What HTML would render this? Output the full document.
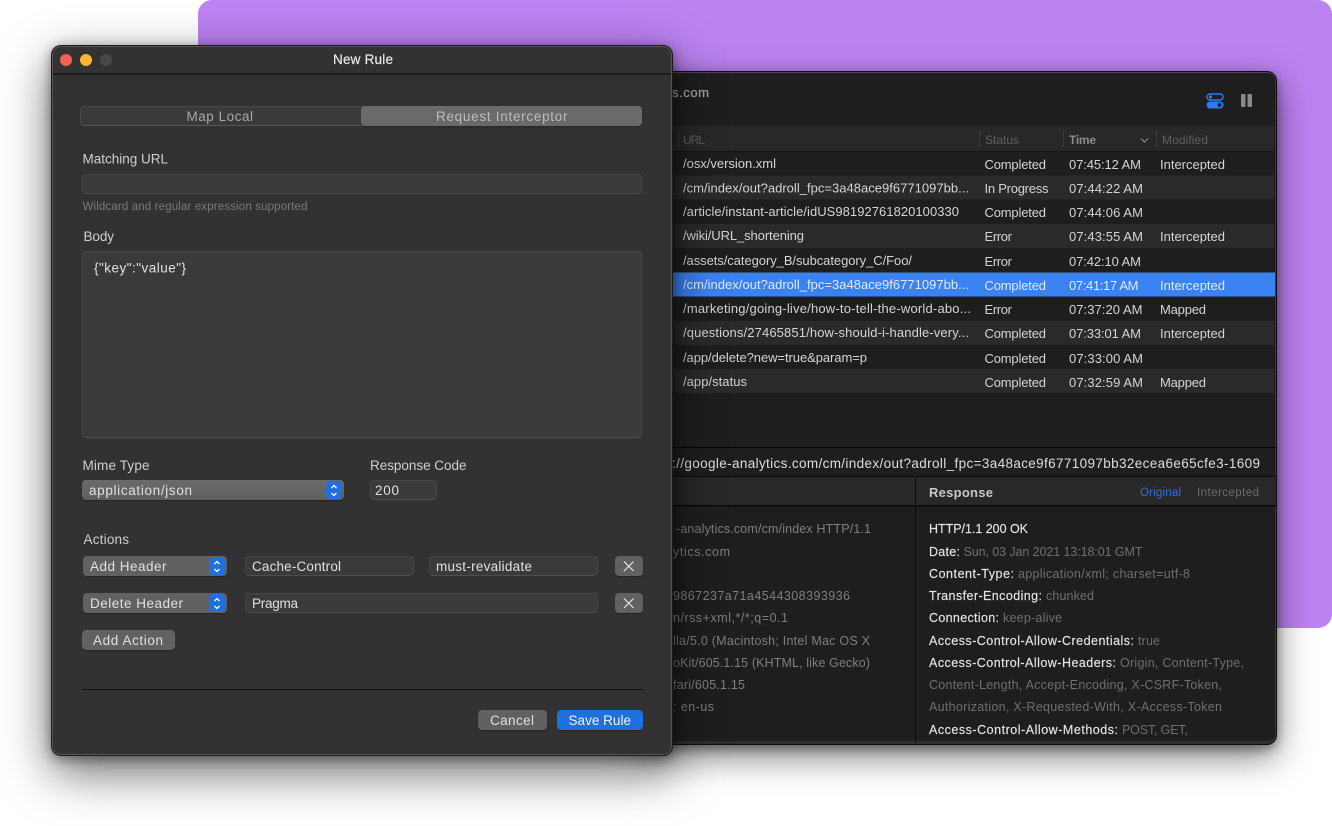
<!DOCTYPE html>
<html><head><meta charset="utf-8"><title>New Rule</title>
<style>
html,body{margin:0;padding:0;width:1332px;height:826px;overflow:hidden;background:#fff}
.a{position:absolute;box-sizing:border-box}
svg{position:absolute;left:0;top:0}
text{font-family:"Liberation Sans",sans-serif;font-size:13px;white-space:pre}
.r{fill:#d4d4d4}.s{fill:#d4d4d4}.h{fill:#5f5f5f;font-size:12px}
.k{fill:#e4e4e4;stroke:#e4e4e4;stroke-width:.15px;font-size:12.5px}.v{fill:#6f6f6f;font-size:12.5px}.q{fill:#7f7f7f;font-size:12.5px}
.d text{font-size:13.5px}
.l{fill:#cfcfcf}.w{fill:#e0e0e0}
.seg{border-radius:4px}
.inp{background:#3a3a3a;border:1px solid #464646;border-bottom-color:#4e4e4e;border-radius:4px}
.btn{background:#616161;border-radius:4px;box-shadow:0 1px 1px rgba(0,0,0,.3)}
.step{background:#1f6fdd;border-radius:4px;width:16px;height:18px;top:1px}
</style></head>
<body>
<div class="a" style="left:198px;top:0;width:1134px;height:628px;background:#bc82f1;border-radius:14px"></div>

<div class="a" style="left:640px;top:71px;width:637px;height:674px;background:#1e1e1e;border-radius:10px;border:1px solid #0e0e0e;box-shadow:0 4px 10px rgba(0,0,0,.38),0 12px 34px rgba(0,0,0,.5),inset 0 1px 0 #4a4a4a,inset -1px 0 0 #3a3a3a,inset 0 -3px 0 #2e2e2e"></div>

<svg width="1332" height="826" viewBox="0 0 1332 826">
<rect x="641" y="126" width="633" height="25" fill="#282828"/>
<rect x="641" y="151" width="633" height="1" fill="#141414"/>
<rect x="641" y="175.500" width="633" height="24" fill="#2a2a2a"/>
<rect x="641" y="224" width="633" height="24" fill="#2a2a2a"/>
<rect x="641" y="321" width="633" height="24" fill="#2a2a2a"/>
<rect x="641" y="369" width="633" height="24" fill="#2a2a2a"/>
<rect x="641" y="272.500" width="634" height="24" fill="#3b82f1"/>
<rect x="678" y="131" width="1" height="16" fill="#3c3c3c"/>
<rect x="979" y="131" width="1" height="16" fill="#3c3c3c"/>
<rect x="1063" y="131" width="1" height="16" fill="#3c3c3c"/>
<rect x="1156" y="131" width="1" height="16" fill="#3c3c3c"/>
<rect x="641" y="447" width="635" height="1" fill="#050505"/>
<rect x="641" y="476" width="635" height="1" fill="#0a0a0a"/>
<rect x="641" y="477" width="635" height="28" fill="#282828"/>
<rect x="641" y="505" width="635" height="1.500" fill="#0a0a0a"/>
<rect x="915" y="477" width="1" height="266" fill="#0a0a0a"/>

<rect x="1207" y="94" width="16" height="6" rx="3" fill="none" stroke="#2f7bf0" stroke-width="1.400"/>
<circle cx="1210.500" cy="97" r="1.600" fill="#2f7bf0"/>
<rect x="1206.500" y="101.500" width="17" height="7" rx="3.500" fill="#2f7bf0"/>
<circle cx="1219.500" cy="105" r="2" fill="#1e1e1e"/>
<rect x="1241" y="94" width="4.500" height="13" rx="1" fill="#8a8a8a"/>
<rect x="1247.500" y="94" width="4.500" height="13" rx="1" fill="#8a8a8a"/>
<path d="M1141 138.500l3.500 3.500 3.500-3.500" fill="none" stroke="#8a8a8a" stroke-width="1.200"/>

<text x="672" y="97" fill="#a0a0a0" stroke="#a0a0a0" stroke-width=".3" textLength="37">s.com</text>

<text class="h" x="683" y="144" textLength="22">URL</text>
<text class="h" x="985" y="144" textLength="34">Status</text>
<text class="h" x="1069" y="144" textLength="27" style="fill:#8c8c8c;font-weight:bold">Time</text>
<text class="h" x="1162" y="144" textLength="46">Modified</text>

<text class="r" x="683" y="168" textLength="93">/osx/version.xml</text>
<text class="s" x="984.500" y="169" textLength="61.500">Completed</text>
<text class="s" x="1069" y="169" textLength="72">07:45:12 AM</text>
<text class="s" x="1160" y="169" textLength="65">Intercepted</text>

<text class="r" x="683" y="192.500" textLength="286">/cm/index/out?adroll_fpc=3a48ace9f6771097bb...</text>
<text class="s" x="984.500" y="193" textLength="64">In Progress</text>
<text class="s" x="1069" y="193" textLength="74">07:44:22 AM</text>

<text class="r" x="683" y="216" textLength="276">/article/instant-article/idUS98192761820100330</text>
<text class="s" x="984.500" y="217" textLength="61.500">Completed</text>
<text class="s" x="1069" y="217" textLength="74">07:44:06 AM</text>

<text class="r" x="683" y="240" textLength="121">/wiki/URL_shortening</text>
<text class="s" x="984.500" y="241" textLength="27.500">Error</text>
<text class="s" x="1069" y="241" textLength="74">07:43:55 AM</text>
<text class="s" x="1160" y="241" textLength="65">Intercepted</text>

<text class="r" x="683" y="265" textLength="229">/assets/category_B/subcategory_C/Foo/</text>
<text class="s" x="984.500" y="266" textLength="27.500">Error</text>
<text class="s" x="1069" y="266" textLength="72">07:42:10 AM</text>

<text x="683" y="289" fill="#dfeaff" textLength="286">/cm/index/out?adroll_fpc=3a48ace9f6771097bb...</text>
<text x="984.500" y="290" fill="#dfeaff" textLength="61.500">Completed</text>
<text x="1069" y="290" fill="#dfeaff" textLength="69.500">07:41:17 AM</text>
<text x="1160" y="290" fill="#dfeaff" textLength="65">Intercepted</text>

<text class="r" x="683" y="313" textLength="288">/marketing/going-live/how-to-tell-the-world-abo...</text>
<text class="s" x="984.500" y="314" textLength="27.500">Error</text>
<text class="s" x="1069" y="314" textLength="73.500">07:37:20 AM</text>
<text class="s" x="1160" y="314" textLength="46">Mapped</text>

<text class="r" x="683" y="337" textLength="286">/questions/27465851/how-should-i-handle-very...</text>
<text class="s" x="984.500" y="338" textLength="61.500">Completed</text>
<text class="s" x="1069" y="338" textLength="72">07:33:01 AM</text>
<text class="s" x="1160" y="338" textLength="65">Intercepted</text>

<text class="r" x="683" y="362" textLength="184">/app/delete?new=true&amp;param=p</text>
<text class="s" x="984.500" y="363" textLength="61.500">Completed</text>
<text class="s" x="1069" y="363" textLength="74">07:33:00 AM</text>

<text class="r" x="683" y="386" textLength="64">/app/status</text>
<text class="s" x="984.500" y="387" textLength="61.500">Completed</text>
<text class="s" x="1069" y="387" textLength="74">07:32:59 AM</text>
<text class="s" x="1160" y="387" textLength="46">Mapped</text>

<text x="672" y="468" fill="#dedede" textLength="588" style="font-size:13.500px">://google-analytics.com/cm/index/out?adroll_fpc=3a48ace9f6771097bb32ecea6e65cfe3-1609</text>

<text x="929" y="497" fill="#c8c8c8" font-weight="bold" textLength="64">Response</text>
<text x="1140" y="496" fill="#2f72dc" style="font-size:11.500px" textLength="41">Original</text>
<text x="1197" y="496" fill="#6c6c6c" style="font-size:11.500px" textLength="62">Intercepted</text>

<text class="q" x="676" y="533" textLength="195">-analytics.com/cm/index HTTP/1.1</text>
<text class="q" x="673" y="556" textLength="57">ytics.com</text>
<text class="q" x="673" y="600" textLength="177">9867237a71a4544308393936</text>
<text class="q" x="673" y="622" textLength="115">n/rss+xml,*/*;q=0.1</text>
<text class="q" x="673" y="645" textLength="197">lla/5.0 (Macintosh; Intel Mac OS X</text>
<text class="q" x="673" y="667" textLength="197">oKit/605.1.15 (KHTML, like Gecko)</text>
<text class="q" x="673" y="689" textLength="72">fari/605.1.15</text>
<text class="q" x="673" y="711" textLength="41">: en-us</text>

<text class="k" x="929" y="533" textLength="99">HTTP/1.1 200 OK</text>
<text class="k" x="929" y="556" textLength="31">Date:</text><text class="v" x="963.500" y="556" textLength="179">Sun, 03 Jan 2021 13:18:01 GMT</text>
<text class="k" x="929" y="578" textLength="85">Content-Type:</text><text class="v" x="1018" y="578" textLength="172">application/xml; charset=utf-8</text>
<text class="k" x="929" y="600" textLength="113">Transfer-Encoding:</text><text class="v" x="1046" y="600" textLength="48">chunked</text>
<text class="k" x="929" y="622" textLength="70">Connection:</text><text class="v" x="1003" y="622" textLength="59">keep-alive</text>
<text class="k" x="929" y="645" textLength="205">Access-Control-Allow-Credentials:</text><text class="v" x="1138" y="645" textLength="22">true</text>
<text class="k" x="929" y="667" textLength="187">Access-Control-Allow-Headers:</text><text class="v" x="1120" y="667" textLength="124">Origin, Content-Type,</text>
<text class="v" x="929" y="689" textLength="293">Content-Length, Accept-Encoding, X-CSRF-Token,</text>
<text class="v" x="929" y="711" textLength="293">Authorization, X-Requested-With, X-Access-Token</text>
<text class="k" x="929" y="734" textLength="189">Access-Control-Allow-Methods:</text><text class="v" x="1122" y="734" textLength="66">POST, GET,</text>
</svg>

<div class="a" style="left:51px;top:45px;width:622px;height:711px;background:#323232;border-radius:10px;border:1px solid #1a1a1a;box-shadow:0 3px 12px rgba(0,0,0,.42),0 16px 48px rgba(0,0,0,.58),inset 0 0 0 1px #565656"></div>
<div class="a" style="left:53px;top:73px;width:618px;height:1.500px;background:#1c1c1c"></div>
<div class="a" style="left:60px;top:54px;width:12px;height:12px;border-radius:50%;background:#f45f58"></div>
<div class="a" style="left:80px;top:54px;width:12px;height:12px;border-radius:50%;background:#fbb82e"></div>
<div class="a" style="left:100px;top:54px;width:12px;height:12px;border-radius:50%;background:#484848"></div>

<div class="a seg" style="left:80px;top:106px;width:562px;height:20px;background:#3a3a3a;border:1px solid #484848;border-bottom-color:#555"></div>
<div class="a seg" style="left:361px;top:106px;width:281px;height:20px;background:#6a6a6a;box-shadow:0 1px 1px rgba(0,0,0,.25)"></div>
<div class="a inp" style="left:82px;top:174px;width:560px;height:20px"></div>
<div class="a inp" style="left:82px;top:251px;width:560px;height:187px"></div>
<div class="a btn" style="left:82px;top:480px;width:262px;height:20px;background:linear-gradient(#6b6b6b,#5f5f5f)"><div class="a step" style="left:244px"></div></div>
<div class="a inp" style="left:370px;top:480px;width:67px;height:20px"></div>
<div class="a btn" style="left:83px;top:556px;width:144px;height:20px"><div class="a step" style="left:126px"></div></div>
<div class="a inp" style="left:245px;top:556px;width:169px;height:20px"></div>
<div class="a inp" style="left:429px;top:556px;width:169px;height:20px"></div>
<div class="a btn" style="left:615px;top:556px;width:28px;height:20px"></div>
<div class="a btn" style="left:83px;top:593px;width:144px;height:20px"><div class="a step" style="left:126px"></div></div>
<div class="a inp" style="left:245px;top:593px;width:353px;height:20px"></div>
<div class="a btn" style="left:615px;top:593px;width:28px;height:20px"></div>
<div class="a btn" style="left:82px;top:630px;width:93px;height:20px"></div>
<div class="a" style="left:82px;top:689px;width:561px;height:1px;background:#0c0c0c"></div>
<div class="a btn" style="left:478px;top:710px;width:69px;height:20px"></div>
<div class="a btn" style="left:557px;top:710px;width:86px;height:20px;background:#1f6fdd"></div>

<svg class="d" width="1332" height="826" viewBox="0 0 1332 826">
<g fill="none" stroke="#fff" stroke-width="1.300">
<path d="M331.500 488l2.500-2.500 2.500 2.500M331.500 493l2.500 2.500 2.500-2.500"/>
<path d="M214.500 564l2.500-2.500 2.500 2.500M214.500 569l2.500 2.500 2.500-2.500"/>
<path d="M214.500 601l2.500-2.500 2.500 2.500M214.500 606l2.500 2.500 2.500-2.500"/>
</g>
<g fill="none" stroke="#e6e6e6" stroke-width="1.200">
<path d="M624 561.500l9.500 9.500M633.500 561.500l-9.500 9.500"/>
<path d="M624 598.500l9.500 9.500M633.500 598.500l-9.500 9.500"/>
</g>
<text x="333" y="64" fill="#e8e8e8" stroke="#e8e8e8" stroke-width=".2" textLength="60">New Rule</text>
<text x="186.500" y="121" fill="#a8a8a8" textLength="66.500">Map Local</text>
<text x="436" y="121" fill="#bdbdbd" textLength="131.500">Request Interceptor</text>
<text class="l" x="82.500" y="163.500" textLength="85.500">Matching URL</text>
<text x="82.500" y="210" fill="#7a7a7a" style="font-size:11.500px" textLength="225">Wildcard and regular expression supported</text>
<text class="l" x="83.500" y="241" textLength="30.500">Body</text>
<text class="w" x="94" y="272.500" textLength="92">{"key":"value"}</text>
<text class="l" x="82.500" y="470" textLength="67">Mime Type</text>
<text class="l" x="370" y="470" textLength="96.500">Response Code</text>
<text class="w" x="89" y="495" textLength="103">application/json</text>
<text class="w" x="375" y="495" textLength="24">200</text>
<text class="l" x="83.500" y="544" textLength="45.500">Actions</text>
<text class="w" x="90" y="571" textLength="76.500">Add Header</text>
<text class="w" x="252" y="571" textLength="89">Cache-Control</text>
<text class="w" x="436" y="571" textLength="96">must-revalidate</text>
<text class="w" x="90" y="608" textLength="93">Delete Header</text>
<text class="w" x="252" y="608" textLength="46">Pragma</text>
<text class="w" x="93" y="645" textLength="70">Add Action</text>
<text class="w" x="490" y="725" textLength="44">Cancel</text>
<text x="568.500" y="725" fill="#f0f5ff" textLength="62.500">Save Rule</text>
</svg>
</body></html>
